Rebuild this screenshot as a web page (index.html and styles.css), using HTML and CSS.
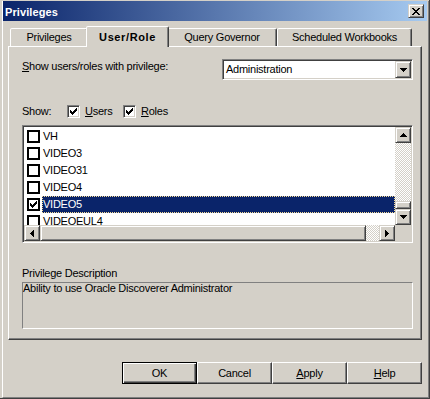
FILE: index.html
```html
<!DOCTYPE html>
<html lang="en">
<head>
    <meta charset="UTF-8">
    <meta name="viewport" content="width=device-width, initial-scale=1.0">
    <title>Privileges</title>
    <link rel="stylesheet" href="styles.css">
</head>
<body>
    <div class="window">
        <div class="frame">
            <div class="titlebar">
                <span class="title">Privileges</span>
                <div class="close raised">
                    <svg width="8" height="7" viewBox="0 0 8 7" shape-rendering="crispEdges"><path d="M0 0h2v1H0z M6 0h2v1H6z M1 1h2v1H1z M5 1h2v1H5z M2 2h4v1H2z M3 3h2v1H3z M2 4h4v1H2z M1 5h2v1H1z M5 5h2v1H5z M0 6h2v1H0z M6 6h2v1H6z"/></svg>
                </div>
            </div>

            <div class="tabs">
                <div class="tab tab-priv">Privileges</div>
                <div class="tab tab-user active">User/Role</div>
                <div class="tab tab-query">Query Governor</div>
                <div class="tab tab-sched">Scheduled Workbooks</div>
            </div>

            <div class="panel">
                <div class="priv-row">
                    <label class="priv-label"><u>S</u>how users/roles with privilege:</label>
                    <div class="combo">
                        <span class="combo-text">Administration</span>
                        <div class="combo-btn raised">
                            <svg width="7" height="4" viewBox="0 0 7 4" shape-rendering="crispEdges"><path d="M0 0h7v1H0z M1 1h5v1H1z M2 2h3v1H2z M3 3h1v1H3z"/></svg>
                        </div>
                    </div>
                </div>

                <div class="show-row">
                    <span class="show-label">Show:</span>
                    <div class="opt">
                        <span class="check3d"><svg width="7" height="7" viewBox="0 0 7 7" shape-rendering="crispEdges"><path d="M0 2h1v3H0z M1 3h1v3H1z M2 4h1v3H2z M3 3h1v3H3z M4 2h1v3H4z M5 1h1v3H5z M6 0h1v3H6z"/></svg></span>
                        <span><u>U</u>sers</span>
                    </div>
                    <div class="opt">
                        <span class="check3d"><svg width="7" height="7" viewBox="0 0 7 7" shape-rendering="crispEdges"><path d="M0 2h1v3H0z M1 3h1v3H1z M2 4h1v3H2z M3 3h1v3H3z M4 2h1v3H4z M5 1h1v3H5z M6 0h1v3H6z"/></svg></span>
                        <span><u>R</u>oles</span>
                    </div>
                </div>

                <div class="listbox">
                    <div class="items">
                        <div class="item"><span class="check"></span><span class="item-text">VH</span></div>
                        <div class="item"><span class="check"></span><span class="item-text">VIDEO3</span></div>
                        <div class="item"><span class="check"></span><span class="item-text">VIDEO31</span></div>
                        <div class="item"><span class="check"></span><span class="item-text">VIDEO4</span></div>
                        <div class="item selected"><span class="check"><svg width="7" height="7" viewBox="0 0 7 7" shape-rendering="crispEdges"><path d="M0 2h1v3H0z M1 3h1v3H1z M2 4h1v3H2z M3 3h1v3H3z M4 2h1v3H4z M5 1h1v3H5z M6 0h1v3H6z"/></svg></span><span class="item-text">VIDEO5</span></div>
                        <div class="item"><span class="check"></span><span class="item-text">VIDEOEUL4</span></div>
                    </div>
                    <div class="vscroll">
                        <div class="sbtn raised"><svg width="7" height="4" viewBox="0 0 7 4" shape-rendering="crispEdges"><path d="M3 0h1v1H3z M2 1h3v1H2z M1 2h5v1H1z M0 3h7v1H0z"/></svg></div>
                        <div class="track"></div>
                        <div class="vthumb raised"></div>
                        <div class="sbtn raised"><svg width="7" height="4" viewBox="0 0 7 4" shape-rendering="crispEdges"><path d="M0 0h7v1H0z M1 1h5v1H1z M2 2h3v1H2z M3 3h1v1H3z"/></svg></div>
                    </div>
                    <div class="hscroll">
                        <div class="sbtn raised"><svg width="4" height="7" viewBox="0 0 4 7" shape-rendering="crispEdges"><path d="M3 0h1v7H3z M2 1h1v5H2z M1 2h1v3H1z M0 3h1v1H0z"/></svg></div>
                        <div class="hthumb raised"></div>
                        <div class="track htrack"></div>
                        <div class="sbtn raised"><svg width="4" height="7" viewBox="0 0 4 7" shape-rendering="crispEdges"><path d="M0 0h1v7H0z M1 1h1v5H1z M2 2h1v3H2z M3 3h1v1H3z"/></svg></div>
                    </div>
                    <div class="corner"></div>
                </div>

                <div class="desc-label">Privilege Description</div>
                <div class="desc-box">Ability to use Oracle Discoverer Administrator</div>
            </div>

            <div class="buttons">
                <div class="btn default">OK</div>
                <div class="btn">Cancel</div>
                <div class="btn"><u>A</u>pply</div>
                <div class="btn"><u>H</u>elp</div>
            </div>
        </div>
    </div>
</body>
</html>
```

FILE: styles.css
```css
* { box-sizing: border-box; }
body { margin: 0; background: #d4d0c8; font-family: "Liberation Sans", Arial, sans-serif; font-size: 11px; line-height: 13px; letter-spacing: -0.25px; color: #000; }
u { text-decoration: underline; text-underline-offset: 1px; }

.window { width: 430px; height: 399px; padding: 1px 0 0 2px; border-right: 1px solid #404040; border-bottom: 1px solid #404040; }
.frame { height: 100%; border-left: 1px solid #fff; border-right: 1px solid #808080; border-bottom: 1px solid #808080; padding-right: 1px; }

.titlebar { height: 20px; display: flex; align-items: center; justify-content: space-between; padding: 0 3px 0 2px; background: linear-gradient(to right, #0a246a, #a6caf0); }
.title { color: #fff; font-weight: bold; letter-spacing: 0.1px; padding-top: 2px; }
.raised { background: #d4d0c8; border: 1px solid; border-color: #d4d0c8 #404040 #404040 #d4d0c8; box-shadow: inset 1px 1px #fff, inset -1px -1px #808080; display: flex; align-items: center; justify-content: center; }
.close { width: 16px; height: 14px; }

.tabs { display: flex; align-items: flex-start; height: 20px; margin: 5px 0 0 7px; }
.tab { height: 18px; margin-top: 2px; display: flex; align-items: center; justify-content: center; background: #d4d0c8; border: 1px solid; border-bottom: none; border-color: #fff #404040 transparent #fff; box-shadow: inset -1px 0 #808080; border-radius: 2px 2px 0 0; }
.tab-priv { width: 78px; }
.tab-user { width: 83px; }
.tab-query { width: 110px; }
.tab-sched { width: 135px; }
.tab.active { height: 21px; margin: 0 -2px; padding-top: 1px; font-weight: bold; letter-spacing: 0.6px; position: relative; z-index: 1; }

.panel { margin-left: 5px; width: 414px; height: 294px; border: 1px solid; border-color: #fff #404040 #404040 #fff; box-shadow: inset -1px -1px #808080; padding: 12px 8px 0 13px; }

.priv-row { display: flex; height: 21px; }
.priv-label { width: 200px; padding-top: 1px; }
.combo { flex: 1; display: flex; background: #fff; border: 1px solid; border-color: #808080 #fff #fff #808080; box-shadow: inset 1px 1px #404040, inset -1px -1px #d4d0c8; padding: 1px; }
.combo-text { flex: 1; padding: 2px 0 0 2px; }
.combo-btn { width: 16px; }

.show-row { display: flex; align-items: center; height: 13px; margin-top: 25px; }
.show-label { width: 45px; }
.opt { width: 56px; display: flex; align-items: center; gap: 5px; }
.check3d { width: 13px; height: 13px; flex: none; background: #fff; border: 1px solid; border-color: #808080 #fff #fff #808080; box-shadow: inset 1px 1px #404040, inset -1px -1px #d4d0c8; display: flex; align-items: center; justify-content: center; }

.listbox { margin-top: 7px; height: 118px; background: #fff; border: 1px solid; border-color: #808080 #fff #fff #808080; box-shadow: inset 1px 1px #404040, inset -1px -1px #d4d0c8; padding: 1px; display: grid; grid-template-columns: 1fr 16px; grid-template-rows: 1fr 16px; }
.items { overflow: hidden; padding-top: 1px; }
.item { height: 17px; display: flex; align-items: center; padding-left: 3px; }
.check { width: 13px; height: 13px; flex: none; border: 2px solid #000; background: #fff; display: flex; align-items: center; justify-content: center; }
.item-text { flex: 1; height: 17px; line-height: 17px; margin-left: 2px; padding-left: 1px; }
.item.selected .item-text { background: #0a246a; color: #fff; outline: 1px dotted #f5db95; outline-offset: -1px; }

.vscroll { display: flex; flex-direction: column; }
.hscroll { display: flex; }
.sbtn { width: 16px; height: 16px; flex: none; }
.track { flex: 1; background: repeating-conic-gradient(#d4d0c8 0% 25%, #fff 0% 50%) 0 0 / 2px 2px; }
.htrack { flex: none; width: 13px; }
.vthumb { height: 8px; flex: none; }
.hthumb { flex: 1; }
.corner { background: #d4d0c8; }

.desc-label { margin-top: 24px; height: 13px; }
.desc-box { margin-top: 2px; height: 47px; border: 1px solid; border-color: #808080 #fff #fff #808080; line-height: 10px; padding-left: 0; }

.buttons { display: flex; justify-content: flex-end; margin-top: 22px; padding-right: 5px; }
.btn { width: 75px; height: 22px; display: flex; align-items: center; justify-content: center; background: #d4d0c8; border: 1px solid; border-color: #fff #404040 #404040 #fff; box-shadow: inset -1px -1px #808080; }
.btn.default { border-color: #000; box-shadow: inset 1px 1px #fff, inset -1px -1px #404040, inset -2px -2px #808080; }
```
